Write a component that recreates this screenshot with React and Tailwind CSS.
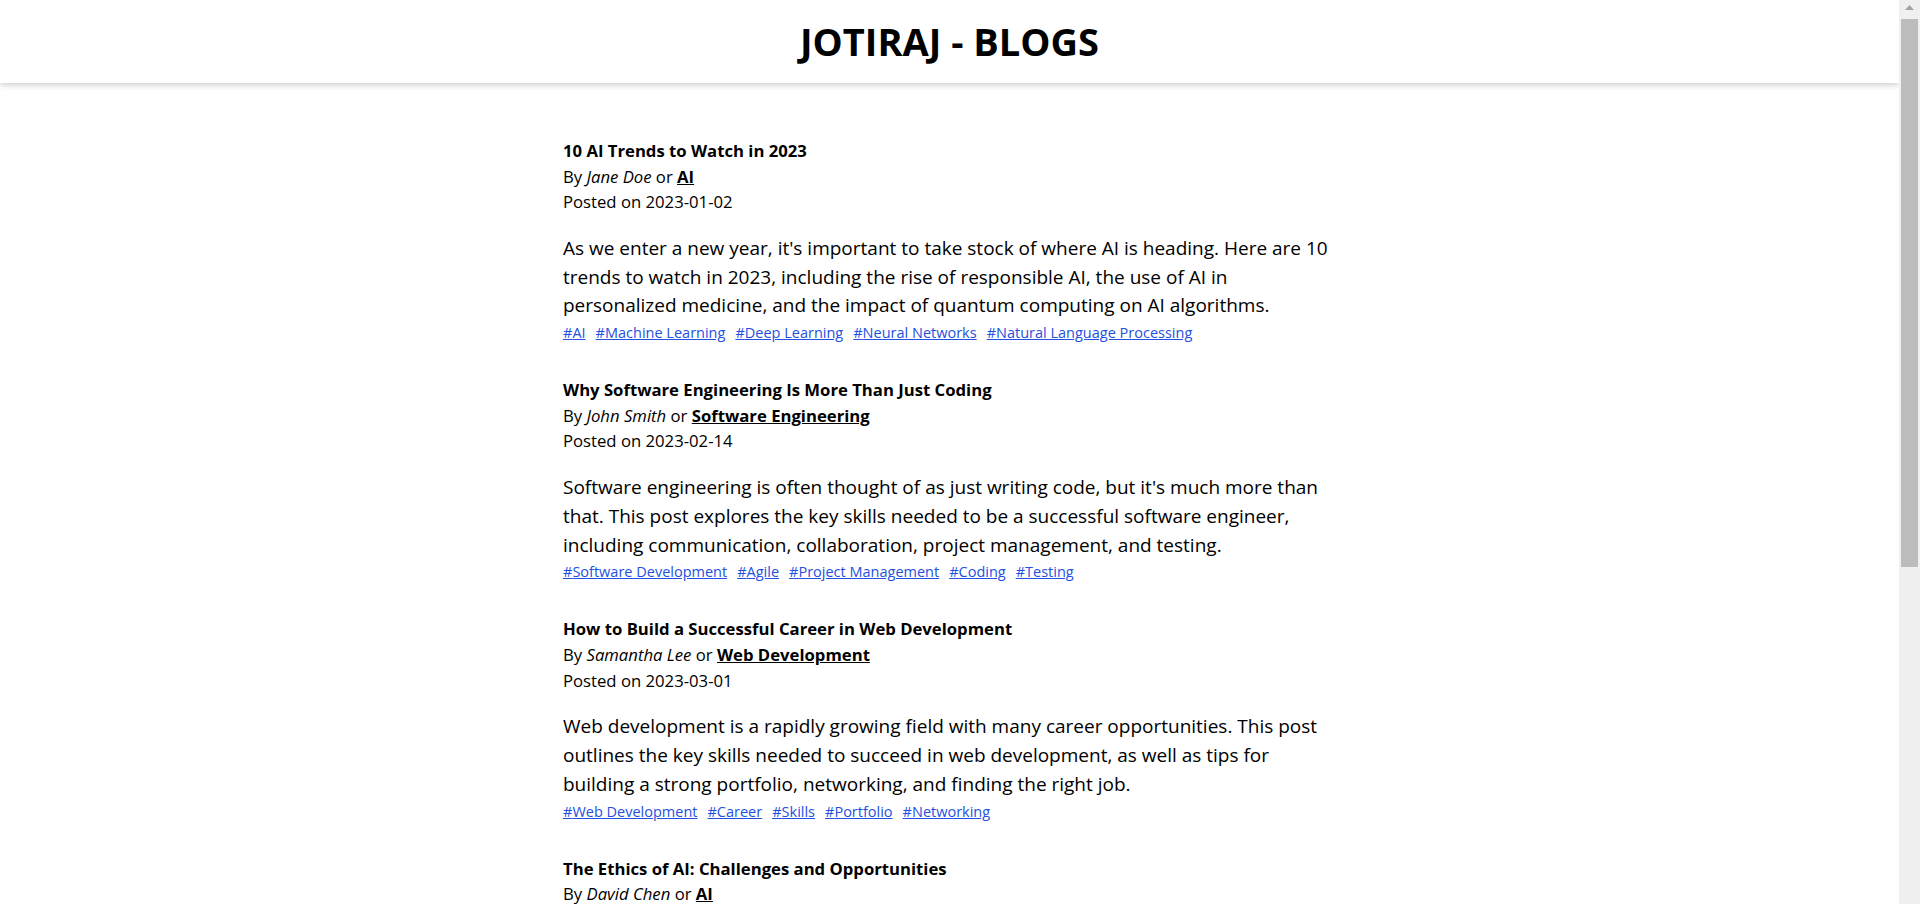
import React from "react";

const posts = [
  {
    title: "10 AI Trends to Watch in 2023",
    author: "Jane Doe",
    category: "AI",
    date: "2023-01-02",
    body: "As we enter a new year, it's important to take stock of where AI is heading. Here are 10 trends to watch in 2023, including the rise of responsible AI, the use of AI in personalized medicine, and the impact of quantum computing on AI algorithms.",
    tags: ["AI", "Machine Learning", "Deep Learning", "Neural Networks", "Natural Language Processing"],
  },
  {
    title: "Why Software Engineering Is More Than Just Coding",
    author: "John Smith",
    category: "Software Engineering",
    date: "2023-02-14",
    body: "Software engineering is often thought of as just writing code, but it's much more than that. This post explores the key skills needed to be a successful software engineer, including communication, collaboration, project management, and testing.",
    tags: ["Software Development", "Agile", "Project Management", "Coding", "Testing"],
  },
  {
    title: "How to Build a Successful Career in Web Development",
    author: "Samantha Lee",
    category: "Web Development",
    date: "2023-03-01",
    body: "Web development is a rapidly growing field with many career opportunities. This post outlines the key skills needed to succeed in web development, as well as tips for building a strong portfolio, networking, and finding the right job.",
    tags: ["Web Development", "Career", "Skills", "Portfolio", "Networking"],
  },
  {
    title: "The Ethics of AI: Challenges and Opportunities",
    author: "David Chen",
    category: "AI",
    date: "2023-04-10",
    body: "As AI becomes more powerful and more widely used, questions about its ethical implications are becoming more pressing. This post looks at the key challenges, from bias and privacy to accountability, and the opportunities to build fairer systems.",
    tags: ["AI", "Ethics", "Bias", "Privacy", "Responsible AI"],
  },
  {
    title: "Getting Started with Cloud Computing",
    author: "Maria Garcia",
    category: "Cloud",
    date: "2023-05-18",
    body: "Cloud computing has changed the way software is built and deployed. This post introduces the main service models, compares the major providers, and shares practical advice for moving your first application to the cloud.",
    tags: ["Cloud", "AWS", "Azure", "DevOps", "Infrastructure"],
  },
];

function Post({ post }) {
  return (
    <article className="mb-[33px]">
      <h3 className="text-[16.7px] leading-[25.6px] font-bold">{post.title}</h3>
      <p className="text-[16.7px] leading-[25.6px]">
        By <em>{post.author}</em> or{" "}
        <a href="#" className="font-bold underline">
          {post.category}
        </a>
      </p>
      <p className="text-[16.7px] leading-[25.6px]">Posted on {post.date}</p>
      <p className="text-[19px] leading-[28.8px] mt-[19px]">{post.body}</p>
      <div className="flex flex-wrap gap-x-[10px] mt-[2px] text-[14.5px] leading-[22px]">
        {post.tags.map((tag) => (
          <a key={tag} href="#" className="text-[#2450e0] underline">
            #{tag}
          </a>
        ))}
      </div>
    </article>
  );
}

function Scrollbar() {
  return (
    <div className="w-[21px] h-full bg-[#f0f0f0] flex flex-col items-center">
      <svg width="11" height="8" viewBox="0 0 11 8" className="mt-[4px]">
        <polygon points="5.5,1 10,6 1,6" fill="#a3a3a3" />
      </svg>
      <div className="w-[17px] h-[548px] mt-[7px] bg-[#bcbcbc]" />
    </div>
  );
}

export default function App() {
  return (
    <div className="h-screen flex bg-white text-black font-['Open_Sans',sans-serif] overflow-hidden">
      <div className="flex-1 min-w-0 overflow-hidden">
        {/* header */}
        <header className="h-[83px] flex items-center justify-center bg-white shadow-[0_2px_6px_rgba(0,0,0,0.2)] relative z-10">
          <h1 className="text-[38px] font-bold">JOTIRAJ - BLOGS</h1>
        </header>

        <main className="w-[779px] mx-auto pl-[3px] pt-[55px] pb-[60px]">
          {posts.map((p) => (
            <Post key={p.title} post={p} />
          ))}
        </main>
      </div>
      <Scrollbar />
    </div>
  );
}
